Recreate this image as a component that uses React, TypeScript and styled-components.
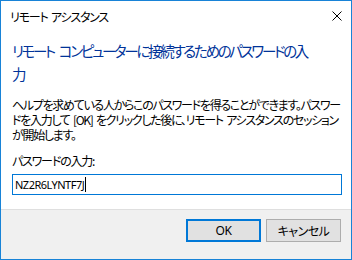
import React from "react";
import styled, { createGlobalStyle } from "styled-components";

const Global = createGlobalStyle`
  html, body { margin: 0; padding: 0; background: #ffffff; }
  #root { width: 352px; height: 260px; }
`;

const Window = styled.div`
  box-sizing: border-box;
  width: 352px;
  height: 260px;
  border: 1px solid #1883d7;
  background: #ffffff;
  display: flex;
  flex-direction: column;
  font-family: "Noto Sans CJK JP", "Noto Sans", sans-serif;
  font-feature-settings: "palt";
  color: #000000;
  overflow: hidden;
`;

const TitleBar = styled.div`
  height: 30px;
  display: flex;
  align-items: center;
  justify-content: space-between;
  padding-left: 9px;
  flex: none;
`;

const Title = styled.span`
  font-size: 12px;
  line-height: 16px;
  margin-top: 1px;
  letter-spacing: -1.2px;
  word-spacing: 2px;
`;

const CloseButton = styled.div`
  width: 46px;
  height: 30px;
  display: flex;
  align-items: center;
  justify-content: center;
  margin-right: -9px;
`;

const Content = styled.div`
  flex: 1;
  padding: 0 10px 0 11px;
  display: flex;
  flex-direction: column;
`;

const Heading = styled.div`
  margin-top: 8px;
  font-size: 14.5px;
  line-height: 23px;
  letter-spacing: -2.3px;
  word-spacing: 4px;
  color: #003399;
  white-space: nowrap;
`;

const Body = styled.div`
  margin-top: 12px;
  font-size: 12px;
  line-height: 15px;
  letter-spacing: -1.3px;
  word-spacing: 2px;
  white-space: nowrap;
`;

const Label = styled.div`
  margin-top: 11px;
  font-size: 12px;
  line-height: 15px;
  letter-spacing: -1.2px;
`;

const Input = styled.div`
  box-sizing: border-box;
  margin-top: 6px;
  width: 330px;
  height: 21px;
  border: 1px solid #0078d7;
  display: flex;
  align-items: center;
  padding-left: 2px;
  font-family: "Noto Sans", sans-serif;
  font-size: 11px;
  letter-spacing: -0.5px;
`;

const Caret = styled.span`
  display: inline-block;
  width: 1px;
  height: 15px;
  background: #000000;
  margin-left: 1px;
`;

const Footer = styled.div`
  flex: none;
  height: 40px;
  background: #f0f0f0;
  border-top: 1px solid #dfdfdf;
  display: flex;
  justify-content: flex-end;
  align-items: flex-start;
  gap: 5px;
  padding: 9px 10px 0 0;
`;

const Button = styled.button<{ $default?: boolean }>`
  box-sizing: border-box;
  width: 75px;
  height: 23px;
  margin: 0;
  padding: 0;
  background: #e1e1e1;
  border: ${(p) => (p.$default ? "2px solid #0078d7" : "1px solid #adadad")};
  font-family: "Noto Sans", "Noto Sans CJK JP", sans-serif;
  font-feature-settings: "palt";
  font-size: 12px;
  letter-spacing: -0.5px;
  color: #000000;
`;

export default function App() {
  return (
    <>
      <Global />
      <Window>
        <TitleBar>
          <Title>リモート アシスタンス</Title>
          <CloseButton>
            <svg width="10" height="10" viewBox="0 0 10 10">
              <path d="M0.5 0.5 L9.5 9.5 M9.5 0.5 L0.5 9.5" stroke="#000" strokeWidth="1" />
            </svg>
          </CloseButton>
        </TitleBar>
        <Content>
          <Heading>
            リモート コンピューターに接続するためのパスワードの入
            <br />
            力
          </Heading>
          <Body>
            ヘルプを求めている人からこのパスワードを得ることができます。パスワー
            <br />
            ドを入力して [OK] をクリックした後に、リモート アシスタンスのセッション
            <br />
            が開始します。
          </Body>
          <Label>パスワードの入力:</Label>
          <Input>
            NZ2R6LYNTF7J
            <Caret />
          </Input>
        </Content>
        <Footer>
          <Button $default>OK</Button>
          <Button>キャンセル</Button>
        </Footer>
      </Window>
    </>
  );
}
